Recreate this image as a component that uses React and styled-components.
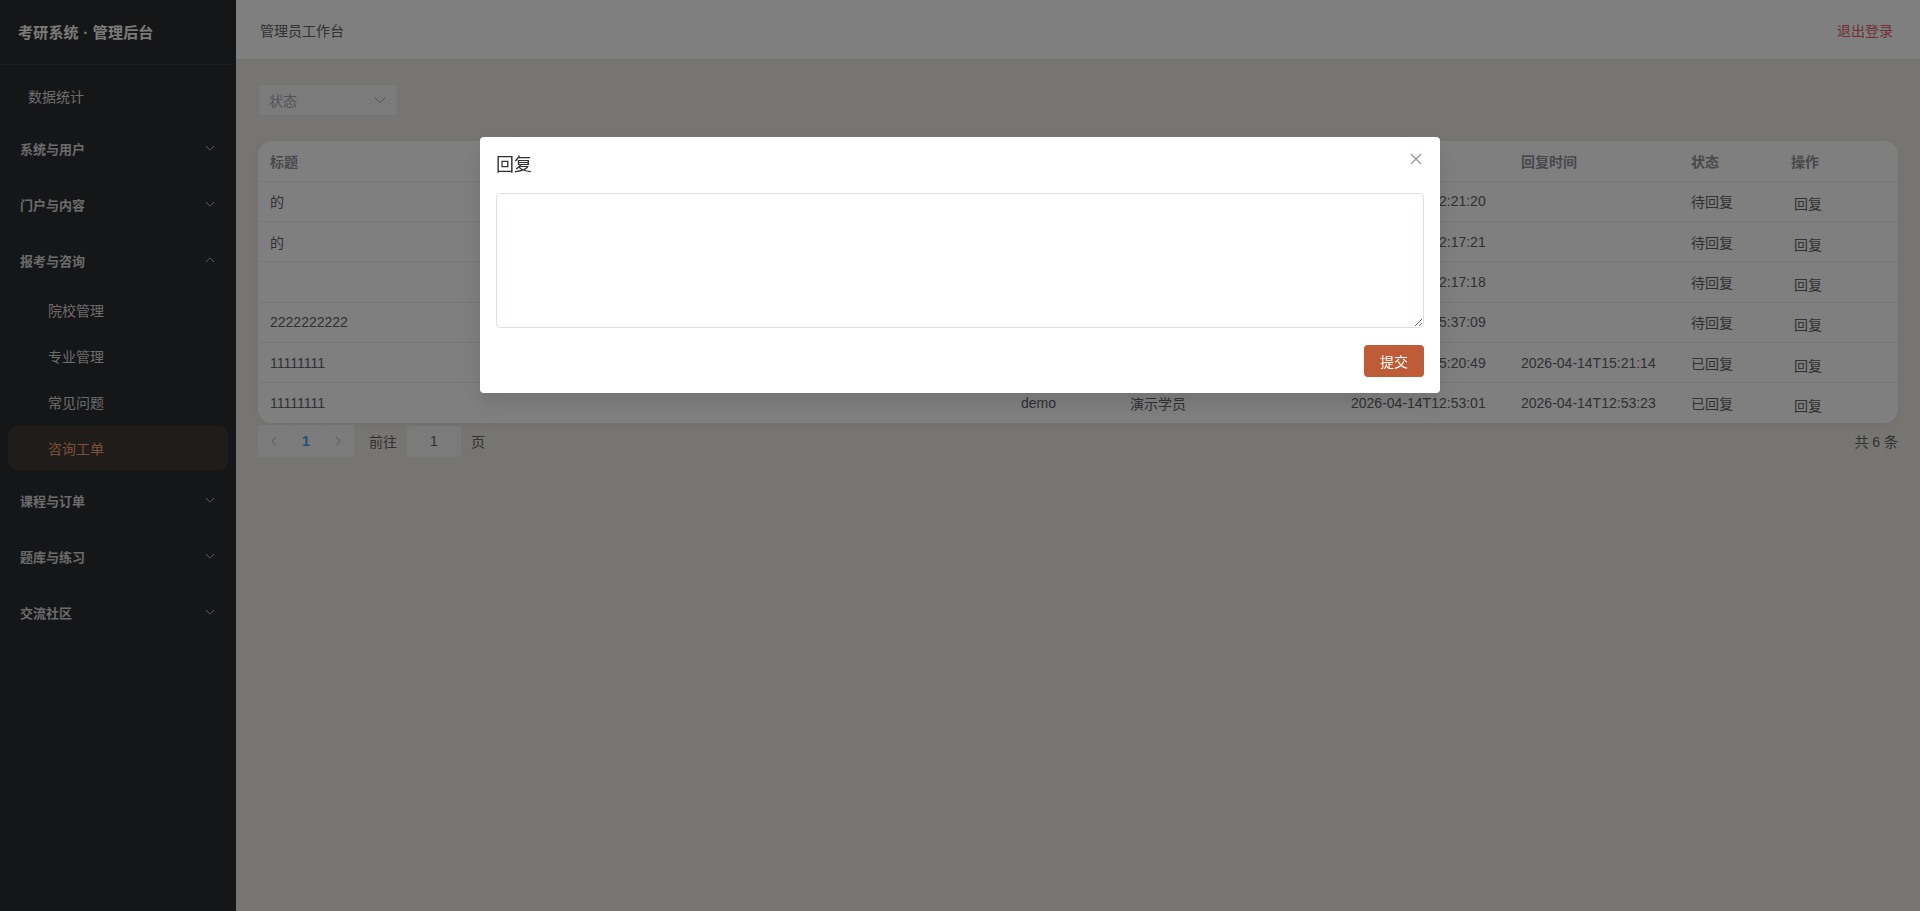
import styled, { createGlobalStyle } from 'styled-components'

const GlobalStyle = createGlobalStyle`
  html, body {
    margin: 0;
    padding: 0;
    height: 100%;
  }
  body {
    font-family: 'Liberation Sans', 'Noto Sans CJK SC', sans-serif;
    font-size: 14px;
    color: #606266;
    overflow: hidden;
  }
  * {
    box-sizing: border-box;
  }
`

const ArrowIcon = ({ size = 12, dir = 'down', color = 'currentColor' }) => {
  const rot = { down: 0, up: 180, left: 90, right: -90 }[dir]
  return (
    <svg width={size} height={size} viewBox="0 0 1024 1024" style={{ transform: `rotate(${rot}deg)` }}>
      <path
        fill={color}
        d="M831.872 340.864 512 652.672 192.128 340.864a30.592 30.592 0 0 0-42.752 0 29.12 29.12 0 0 0 0 41.6L489.664 714.24a32 32 0 0 0 44.672 0l340.288-331.712a29.12 29.12 0 0 0 0-41.728 30.592 30.592 0 0 0-42.752 0z"
      />
    </svg>
  )
}

const Layout = styled.div`
  display: flex;
  height: 100vh;
`

const Sidebar = styled.aside`
  width: 236px;
  flex-shrink: 0;
  background: #2b2d2f;
  display: flex;
  flex-direction: column;
`

const Brand = styled.div`
  height: 65px;
  display: flex;
  align-items: center;
  padding: 0 18px 1px;
  font-size: 15px;
  font-weight: 700;
  letter-spacing: 0.2px;
  color: #f4f4f4;
  border-bottom: 1px solid rgba(255, 255, 255, 0.06);
`

const Menu = styled.nav`
  padding-top: 7px;
  display: flex;
  flex-direction: column;
`

const TopItem = styled.div`
  height: 48px;
  margin: 0 8px;
  padding-left: 20px;
  display: flex;
  align-items: center;
  font-size: 14px;
  color: #d8d8d8;
`

const GroupTitle = styled.div`
  height: 56px;
  padding: 0 20px;
  display: flex;
  align-items: center;
  justify-content: space-between;
  font-size: 13px;
  font-weight: 600;
  color: #d6d6d6;
`

const SubList = styled.div`
  display: flex;
  flex-direction: column;
  gap: 2px;
  padding-bottom: 2px;
`

const SubItem = styled.div`
  height: 44px;
  margin: 0 8px;
  padding-left: 40px;
  display: flex;
  align-items: center;
  font-size: 14px;
  border-radius: 10px;
  color: ${p => (p.$active ? '#f0a070' : '#d6d6d6')};
  background: ${p => (p.$active ? '#403833' : 'transparent')};
`

const Main = styled.main`
  flex: 1;
  display: flex;
  flex-direction: column;
  background: #eeebe3;
  min-width: 0;
`

const TopBar = styled.header`
  height: 60px;
  flex-shrink: 0;
  background: #ffffff;
  border-bottom: 1px solid #e2e2e2;
  display: flex;
  align-items: center;
  justify-content: space-between;
  padding: 0 24px;
`

const PageTitle = styled.div`
  font-size: 14px;
  color: #606266;
`

const Logout = styled.button`
  border: 0;
  background: none;
  font: inherit;
  font-size: 14px;
  color: #e35d5d;
  padding: 0 3px;
`

const Content = styled.div`
  padding: 24px 22px;
  display: flex;
  flex-direction: column;
`

const Filters = styled.div`
  display: flex;
  margin-bottom: 25px;
`

const SelectBox = styled.div`
  width: 140px;
  height: 32px;
  padding: 0 11px;
  display: flex;
  align-items: center;
  justify-content: space-between;
  background: #f6f6f6;
  border-radius: 4px;
  box-shadow: 0 0 0 1px #e6e8ec inset;
  color: #a8abb2;
  font-size: 14px;
`

const TableCard = styled.div`
  background: #ffffff;
  border-radius: 14px;
  overflow: hidden;
  box-shadow: 0 2px 12px rgba(0, 0, 0, 0.05);
`

const Table = styled.table`
  width: 100%;
  border-collapse: collapse;
  table-layout: fixed;
`

const Th = styled.th`
  height: 40px;
  padding: 0 12px;
  text-align: left;
  font-weight: 600;
  color: #909399;
  border-bottom: 1px solid #ebeef5;
  white-space: nowrap;
`

const Td = styled.td`
  height: 40.4px;
  padding: 0 12px;
  color: #606266;
  border-bottom: 1px solid #ebeef5;
  white-space: nowrap;
  overflow: hidden;

  tr:last-child & {
    border-bottom: 0;
  }
`

const RowButton = styled.button`
  border: 0;
  background: none;
  font: inherit;
  font-size: 14px;
  color: #606266;
  padding: 4px 3px 0;
`

const Pagination = styled.div`
  margin-top: 2px;
  display: flex;
  align-items: center;
  font-size: 14px;
  color: #606266;
`

const Pager = styled.div`
  display: flex;
`

const PagerBtn = styled.div`
  width: 32px;
  height: 32px;
  display: flex;
  align-items: center;
  justify-content: center;
  background: #f7f7f7;
  border-radius: 2px;
  color: ${p => (p.$active ? '#409eff' : '#a8abb2')};
  font-weight: ${p => (p.$active ? 700 : 400)};
`

const Jumper = styled.div`
  display: flex;
  align-items: center;
  margin-left: 15px;
  gap: 10px;
`

const JumpInput = styled.div`
  width: 54px;
  height: 31px;
  display: flex;
  align-items: center;
  justify-content: center;
  background: #f6f6f6;
  border-radius: 4px;
  color: #606266;
`

const Total = styled.div`
  margin-left: auto;
`

const Overlay = styled.div`
  position: fixed;
  inset: 0;
  background: rgba(0, 0, 0, 0.5);
  overflow: auto;
`

const Dialog = styled.div`
  position: relative;
  width: 50%;
  margin: 15vh auto 0;
  background: #ffffff;
  border-radius: 4px;
  padding: 16px;
  box-shadow: 0 12px 32px 4px rgba(0, 0, 0, 0.04), 0 8px 20px rgba(0, 0, 0, 0.08);
`

const DialogTitle = styled.div`
  font-size: 18px;
  line-height: 24px;
  color: #303133;
  padding-bottom: 16px;
`

const CloseBtn = styled.button`
  position: absolute;
  top: 0;
  right: 0;
  width: 48px;
  height: 44px;
  border: 0;
  background: none;
  padding: 0;
  display: flex;
  align-items: center;
  justify-content: center;
`

const TextArea = styled.textarea`
  display: block;
  width: 100%;
  height: 135px;
  padding: 5px 11px;
  border: 1px solid #dcdfe6;
  border-radius: 4px;
  font: inherit;
  font-size: 14px;
  line-height: 1.5;
  color: #606266;
  resize: vertical;
  outline: none;
`

const DialogFooter = styled.div`
  padding-top: 17px;
  display: flex;
  justify-content: flex-end;
`

const SubmitBtn = styled.button`
  height: 32px;
  padding: 0 16px;
  border: 0;
  border-radius: 4px;
  background: #bd5c37;
  color: #ffffff;
  font: inherit;
  font-size: 14px;
`

const menu = [
  { title: '系统与用户' },
  { title: '门户与内容' },
  { title: '报考与咨询', open: true, items: ['院校管理', '专业管理', '常见问题', '咨询工单'] },
  { title: '课程与订单' },
  { title: '题库与练习' },
  { title: '交流社区' }
]

const columns = [
  { key: 'title', label: '标题', width: 751 },
  { key: 'user', label: '用户', width: 109 },
  { key: 'name', label: '姓名', width: 221 },
  { key: 'created', label: '创建时间', width: 170 },
  { key: 'replied', label: '回复时间', width: 170 },
  { key: 'status', label: '状态', width: 100 },
  { key: 'op', label: '操作', width: 119 }
]

const rows = [
  { title: '的', user: 'demo', name: '演示学员', created: '2026-04-14T22:21:20', replied: '', status: '待回复' },
  { title: '的', user: 'demo', name: '演示学员', created: '2026-04-14T22:17:21', replied: '', status: '待回复' },
  { title: '', user: 'demo', name: '演示学员', created: '2026-04-14T22:17:18', replied: '', status: '待回复' },
  { title: '2222222222', user: 'demo', name: '演示学员', created: '2026-04-14T15:37:09', replied: '', status: '待回复' },
  { title: '11111111', user: 'demo', name: '演示学员', created: '2026-04-14T15:20:49', replied: '2026-04-14T15:21:14', status: '已回复' },
  { title: '11111111', user: 'demo', name: '演示学员', created: '2026-04-14T12:53:01', replied: '2026-04-14T12:53:23', status: '已回复' }
]

const App = () => {
  return (
    <>
      <GlobalStyle />
      <Layout>
        <Sidebar>
          <Brand>考研系统 · 管理后台</Brand>
          <Menu>
            <TopItem>数据统计</TopItem>
            {menu.map(group => (
              <div key={group.title}>
                <GroupTitle>
                  {group.title}
                  <ArrowIcon dir={group.open ? 'up' : 'down'} color="#d0d0d0" />
                </GroupTitle>
                {group.open && (
                  <SubList>
                    {group.items.map(item => (
                      <SubItem key={item} $active={item === '咨询工单'}>{item}</SubItem>
                    ))}
                  </SubList>
                )}
              </div>
            ))}
          </Menu>
        </Sidebar>

        <Main>
          <TopBar>
            <PageTitle>管理员工作台</PageTitle>
            <Logout>退出登录</Logout>
          </TopBar>

          <Content>
            <Filters>
              <SelectBox>
                状态
                <ArrowIcon size={14} color="#a8abb2" />
              </SelectBox>
            </Filters>

            <TableCard>
              <Table>
                <colgroup>
                  {columns.map(c => <col key={c.key} style={{ width: c.width }} />)}
                </colgroup>
                <thead>
                  <tr>
                    {columns.map(c => <Th key={c.key}>{c.label}</Th>)}
                  </tr>
                </thead>
                <tbody>
                  {rows.map((r, i) => (
                    <tr key={i}>
                      <Td>{r.title}</Td>
                      <Td>{r.user}</Td>
                      <Td>{r.name}</Td>
                      <Td>{r.created}</Td>
                      <Td>{r.replied}</Td>
                      <Td>{r.status}</Td>
                      <Td><RowButton>回复</RowButton></Td>
                    </tr>
                  ))}
                </tbody>
              </Table>
            </TableCard>

            <Pagination>
              <Pager>
                <PagerBtn><ArrowIcon dir="left" /></PagerBtn>
                <PagerBtn $active>1</PagerBtn>
                <PagerBtn><ArrowIcon dir="right" /></PagerBtn>
              </Pager>
              <Jumper>
                前往
                <JumpInput>1</JumpInput>
                页
              </Jumper>
              <Total>共 6 条</Total>
            </Pagination>
          </Content>
        </Main>
      </Layout>

      <Overlay>
        <Dialog>
          <DialogTitle>回复</DialogTitle>
          <CloseBtn aria-label="关闭">
            <svg width="12" height="12" viewBox="0 0 12 12">
              <path d="M1 1 L11 11 M11 1 L1 11" stroke="#909399" strokeWidth="1.1" />
            </svg>
          </CloseBtn>
          <TextArea rows={6} />
          <DialogFooter>
            <SubmitBtn>提交</SubmitBtn>
          </DialogFooter>
        </Dialog>
      </Overlay>
    </>
  )
}

export default App
